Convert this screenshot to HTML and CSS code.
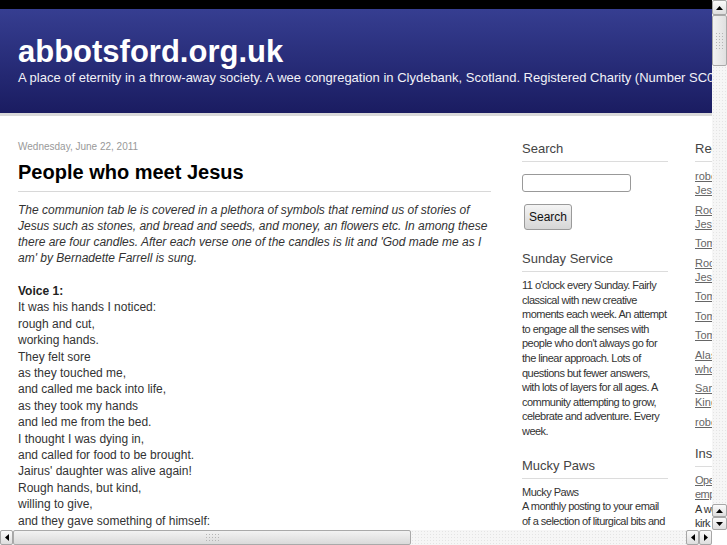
FILE: index.html
```html
<!DOCTYPE html>
<html lang="en">
<head>
<meta charset="utf-8">
<title>abbotsford.org.uk</title>
<link rel="stylesheet" href="styles.css">
</head>
<body>
<div class="window">
  <div class="viewport">
    <div class="page">
      <div class="topbar"></div>
      <header class="masthead">
        <h1 class="site-title">abbotsford.org.uk</h1>
        <p class="tagline">A place of eternity in a throw-away society. A wee congregation in Clydebank, Scotland. Registered Charity (Number SC003612)</p>
      </header>
      <div class="columns">
        <main class="main">
          <div class="date">Wednesday, June 22, 2011</div>
          <h2 class="post-title">People who meet Jesus</h2>
          <p class="intro">The communion tab le is covered in a plethora of symbols that remind us of stories of Jesus such as stones, and bread and seeds, and money, an flowers etc. In among these there are four candles. After each verse one of the candles is lit and 'God made me as I am' by Bernadette Farrell is sung.</p>
          <p class="verse"><b>Voice 1:</b><br>It was his hands I noticed:<br>rough and cut,<br>working hands.<br>They felt sore<br>as they touched me,<br>and called me back into life,<br>as they took my hands<br>and led me from the bed.<br>I thought I was dying in,<br>and called for food to be brought.<br>Jairus' daughter was alive again!<br>Rough hands, but kind,<br>willing to give,<br>and they gave something of himself:</p>
        </main>
        <aside class="sidebar">
          <h3 class="widget-title">Search</h3>
          <div class="search">
            <input class="search-input" type="text">
            <button class="search-btn" type="button">Search</button>
          </div>
          <h3 class="widget-title">Sunday Service</h3>
          <p class="widget-text">11 o'clock every Sunday. Fairly classical with new creative moments each week. An attempt to engage all the senses with people who don't always go for the linear approach. Lots of questions but fewer answers, with lots of layers for all ages. A community attempting to grow, celebrate and adventure. Every week.</p>
          <h3 class="widget-title">Mucky Paws</h3>
          <p class="widget-text">Mucky Paws<br>A monthly posting to your email of a selection of liturgical bits and pieces for all ages.</p>
        </aside>
        <aside class="sidebar">
          <h3 class="widget-title">Recent Posts</h3>
          <ul class="links">
            <li><a href="#">robert on people who met<br>Jesus</a></li>
            <li><a href="#">Rocky roads to walk with<br>Jesus</a></li>
            <li><a href="#">Tom on forgiveness</a></li>
            <li><a href="#">Rocky ground and seeds of<br>Jesus</a></li>
            <li><a href="#">Tom on bread</a></li>
            <li><a href="#">Tom on hope</a></li>
            <li><a href="#">Tom on candles</a></li>
            <li><a href="#">Alasdair on the crowds<br>who followed</a></li>
            <li><a href="#">Sandra on the<br>Kingdom</a></li>
            <li><a href="#">robert on stones</a></li>
          </ul>
          <h3 class="widget-title">Inspiration</h3>
          <p class="widget-text"><a href="#">Open doors and<br>empty tombs</a><br>A wee<br>kirk with big ideas</p>
        </aside>
      </div>
    </div>
  </div>
  <div class="vscroll">
    <div class="sb-btn sb-btn-top"><svg width="7" height="4" viewBox="0 0 7 4"><polygon points="0,4 7,4 3.5,0" fill="#000"/></svg></div>
    <div class="sb-thumb sb-thumb-v"><span class="grip grip-v"></span></div>
    <div class="sb-track"></div>
    <div class="sb-btn sb-btn-sm"><svg width="7" height="4" viewBox="0 0 7 4"><polygon points="0,4 7,4 3.5,0" fill="#000"/></svg></div>
    <div class="sb-btn sb-btn-sm"><svg width="7" height="4" viewBox="0 0 7 4"><polygon points="0,0 7,0 3.5,4" fill="#000"/></svg></div>
  </div>
  <div class="hscroll">
    <div class="sb-btn sb-btn-h"><svg width="4" height="7" viewBox="0 0 4 7"><polygon points="4,0 4,7 0,3.5" fill="#000"/></svg></div>
    <div class="sb-thumb sb-thumb-h"><span class="grip grip-h"></span></div>
    <div class="sb-track"></div>
    <div class="sb-btn sb-btn-h"><svg width="4" height="7" viewBox="0 0 4 7"><polygon points="4,0 4,7 0,3.5" fill="#000"/></svg></div>
    <div class="sb-btn sb-btn-h"><svg width="4" height="7" viewBox="0 0 4 7"><polygon points="0,0 0,7 4,3.5" fill="#000"/></svg></div>
  </div>
  <div class="corner"></div>
</div>
</body>
</html>
```

FILE: styles.css
```css
html, body {
  margin: 0;
  padding: 0;
  background: #fff;
}

body {
  font-family: "Liberation Sans", Arial, Helvetica, sans-serif;
  color: #333;
}

.window {
  width: 727px;
  height: 545px;
  display: grid;
  grid-template-columns: 712px 15px;
  grid-template-rows: 530px 15px;
  overflow: hidden;
}

.viewport {
  overflow: hidden;
  background: #fff;
}

.page {
  width: 900px;
}

.topbar {
  height: 9px;
  background: #000;
}

.masthead {
  height: 107px;
  box-sizing: border-box;
  padding: 25px 0 0 18px;
  background: linear-gradient(#363e91, #1a1c61);
  border-bottom: 3px solid #d9d9d9;
  white-space: nowrap;
}

.site-title {
  margin: 0;
  font-size: 31px;
  line-height: 36px;
  font-weight: bold;
  color: #fff;
}

.tagline {
  margin: 0;
  font-size: 13px;
  line-height: 16px;
  color: #f2f2f8;
}

.columns {
  display: flex;
  align-items: flex-start;
  padding: 24px 0 0 18px;
}

.main {
  width: 473px;
  margin-right: 31px;
  flex: none;
}

.date {
  font-size: 10px;
  line-height: 14px;
  color: #999;
}

.post-title {
  margin: 5px 0 0;
  padding-bottom: 6px;
  font-size: 20px;
  line-height: 26px;
  font-weight: bold;
  color: #000;
  border-bottom: 1px solid #d8d8d8;
}

.intro {
  margin: 10px 0 0;
  font-size: 12px;
  line-height: 16px;
  font-style: italic;
  color: #333;
}

.verse {
  margin: 17px 0 0;
  font-size: 12px;
  line-height: 16.4px;
  color: #333;
}

.verse b {
  color: #222;
}

.sidebar {
  width: 146px;
  margin-right: 27px;
  flex: none;
}

.widget-title {
  margin: 0;
  padding-bottom: 4px;
  font-size: 13px;
  line-height: 17px;
  font-weight: normal;
  color: #444;
  border-bottom: 1px solid #dcdcdc;
}

.search {
  display: flex;
  flex-direction: column;
  align-items: flex-start;
  gap: 12px;
  padding: 12px 0 20px;
}

.search-input {
  width: 109px;
  height: 18px;
  box-sizing: border-box;
  margin: 0;
  border: 1px solid #999;
  border-radius: 3px;
  background: #fff;
}

.search-btn {
  width: 48px;
  height: 26px;
  margin: 0 0 0 2px;
  padding: 0;
  font-family: "Liberation Sans", Arial, sans-serif;
  font-size: 12px;
  color: #111;
  border: 1px solid #9a9a9a;
  border-radius: 3px;
  background: linear-gradient(#f4f4f4, #d6d6d6);
}

.widget-text {
  margin: 6px 0 18px;
  font-size: 11px;
  line-height: 14.6px;
  color: #333;
  letter-spacing: -0.52px;
}

.widget-text a {
  color: #666;
}

.links {
  list-style: none;
  margin: 7px 0 16px;
  padding: 0;
  font-size: 11px;
  line-height: 14px;
}

.links li {
  margin-bottom: 5.5px;
}

.links a {
  color: #666;
}

/* scrollbars */
.vscroll {
  display: flex;
  flex-direction: column;
  background: #f4f4f4;
}

.hscroll {
  display: flex;
  background: #f4f4f4;
}

.corner {
  background: #fff;
}

.sb-btn {
  box-sizing: border-box;
  display: flex;
  align-items: center;
  justify-content: center;
  border: 1px solid #a6a6a6;
  border-radius: 2px;
  background: linear-gradient(#fbfbfb, #dedede);
  flex: none;
}

.sb-btn-top {
  height: 15px;
}

.sb-btn-sm {
  height: 13px;
}

.sb-btn-h {
  width: 13px;
}

.sb-thumb {
  box-sizing: border-box;
  display: flex;
  align-items: center;
  justify-content: center;
  border: 1px solid #a9a9a9;
  border-radius: 2px;
  flex: none;
}

.sb-thumb-v {
  height: 51px;
  background: linear-gradient(90deg, #f2f2f2, #e0e0e0);
}

.sb-thumb-h {
  width: 398px;
  background: linear-gradient(#f2f2f2, #dadada);
}

.sb-track {
  flex: 1;
  background-color: #f6f6f6;
  background-image: radial-gradient(#e4e4e4 0.6px, transparent 0.7px);
  background-size: 3px 3px;
}

.grip {
  display: block;
  background-image: radial-gradient(#b5b5b5 0.7px, transparent 0.8px);
  background-size: 3px 3px;
}

.grip-v {
  width: 9px;
  height: 18px;
}

.grip-h {
  width: 14px;
  height: 9px;
}
```
